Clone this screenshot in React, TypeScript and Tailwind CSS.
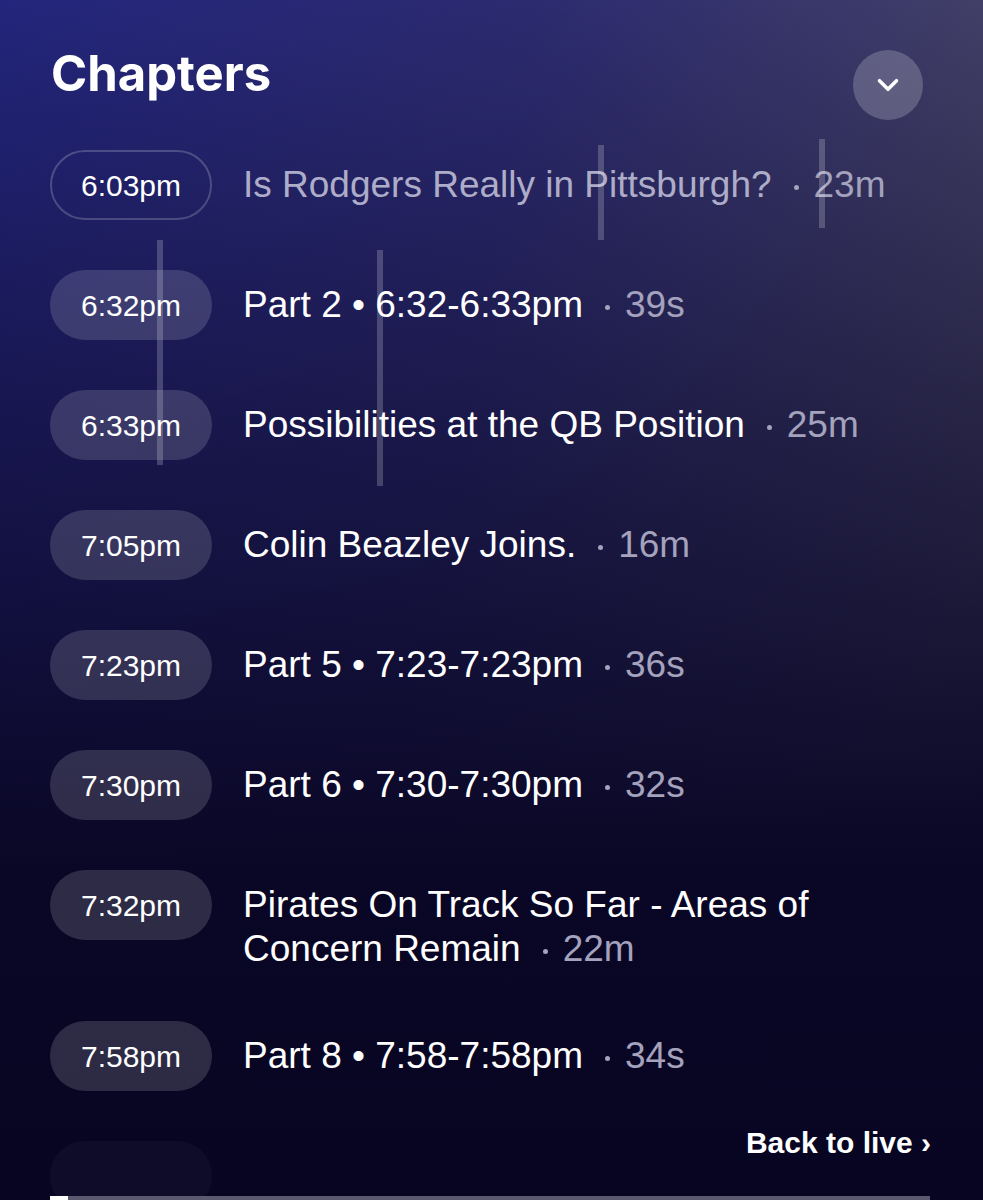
import { ChevronDown } from "lucide-react";

const chapters = [
  { time: "6:03pm", title: "Is Rodgers Really in Pittsburgh?", dur: "23m", current: true },
  { time: "6:32pm", title: "Part 2 • 6:32-6:33pm", dur: "39s" },
  { time: "6:33pm", title: "Possibilities at the QB Position", dur: "25m" },
  { time: "7:05pm", title: "Colin Beazley Joins.", dur: "16m" },
  { time: "7:23pm", title: "Part 5 • 7:23-7:23pm", dur: "36s" },
  { time: "7:30pm", title: "Part 6 • 7:30-7:30pm", dur: "32s" },
  { time: "7:32pm", title: "Pirates On Track So Far - Areas of Concern Remain", dur: "22m" },
  { time: "7:58pm", title: "Part 8 • 7:58-7:58pm", dur: "34s" },
];

function ChapterRow({ time, title, dur, current }: { time: string; title: string; dur: string; current?: boolean }) {
  return (
    <div className="flex items-start gap-[31px]">
      <div
        className={
          "w-[162px] h-[70px] shrink-0 rounded-full flex items-center justify-center text-[30px] text-white " +
          (current ? "border-2 border-white/20" : "bg-white/15")
        }
      >
        {time}
      </div>
      <div className="pt-[13px] w-[680px] text-[37px] leading-[44px]">
        <span className={current ? "text-[#aeadc9]" : "text-white"}>{title}</span>
        <span className="inline-block w-[5px] h-[5px] rounded-full bg-[#a4a2bd] align-middle ml-[22px] mr-[15px]" />
        <span className="text-[#a4a2bd]">{dur}</span>
      </div>
    </div>
  );
}

export default function App() {
  return (
    <div
      className="relative w-[983px] h-[1200px] overflow-hidden bg-[linear-gradient(to_bottom,rgba(9,6,36,0)_0%,rgba(9,6,36,0.5)_35%,#0a0726_72%,#080523_100%),linear-gradient(100deg,#23257c_0%,#2c2b70_45%,#4b4863_100%)]"
      style={{ fontFamily: '"Liberation Sans", Arial, sans-serif' }}
    >
      {/* header */}
      <div className="flex items-start justify-between pl-[51px] pr-[60px] pt-[50px]">
        <h1 className="text-[49px] leading-[46px] mt-px font-bold text-white" style={{ fontFamily: "Inter, sans-serif" }}>
          Chapters
        </h1>
        <button className="w-[70px] h-[70px] rounded-full bg-white/20 flex items-center justify-center">
          <ChevronDown className="w-[34px] h-[34px] text-white" strokeWidth={2.5} />
        </button>
      </div>

      {/* list */}
      <div className="flex flex-col gap-[50px] pl-[50px] mt-[30px]">
        {chapters.map((c) => (
          <ChapterRow key={c.time} {...c} />
        ))}
        <div className="w-[162px] h-[70px] rounded-full bg-white/[0.03]" />
      </div>

      {/* back to live */}
      <div className="absolute right-[52px] top-[1120px] text-[30px] font-bold text-white">
        Back to live ›
      </div>

      {/* progress */}
      <div className="absolute left-[50px] right-[53px] bottom-0 h-[4px] bg-[#5b5970]">
        <div className="w-[18px] h-full bg-white" />
      </div>

      {/* screen artifacts */}
      <div className="absolute left-[157px] top-[240px] w-[6px] h-[225px] bg-white/20" />
      <div className="absolute left-[377px] top-[250px] w-[6px] h-[236px] bg-white/20" />
      <div className="absolute left-[598px] top-[145px] w-[6px] h-[95px] bg-white/20" />
      <div className="absolute left-[819px] top-[139px] w-[6px] h-[89px] bg-white/20" />
    </div>
  );
}
